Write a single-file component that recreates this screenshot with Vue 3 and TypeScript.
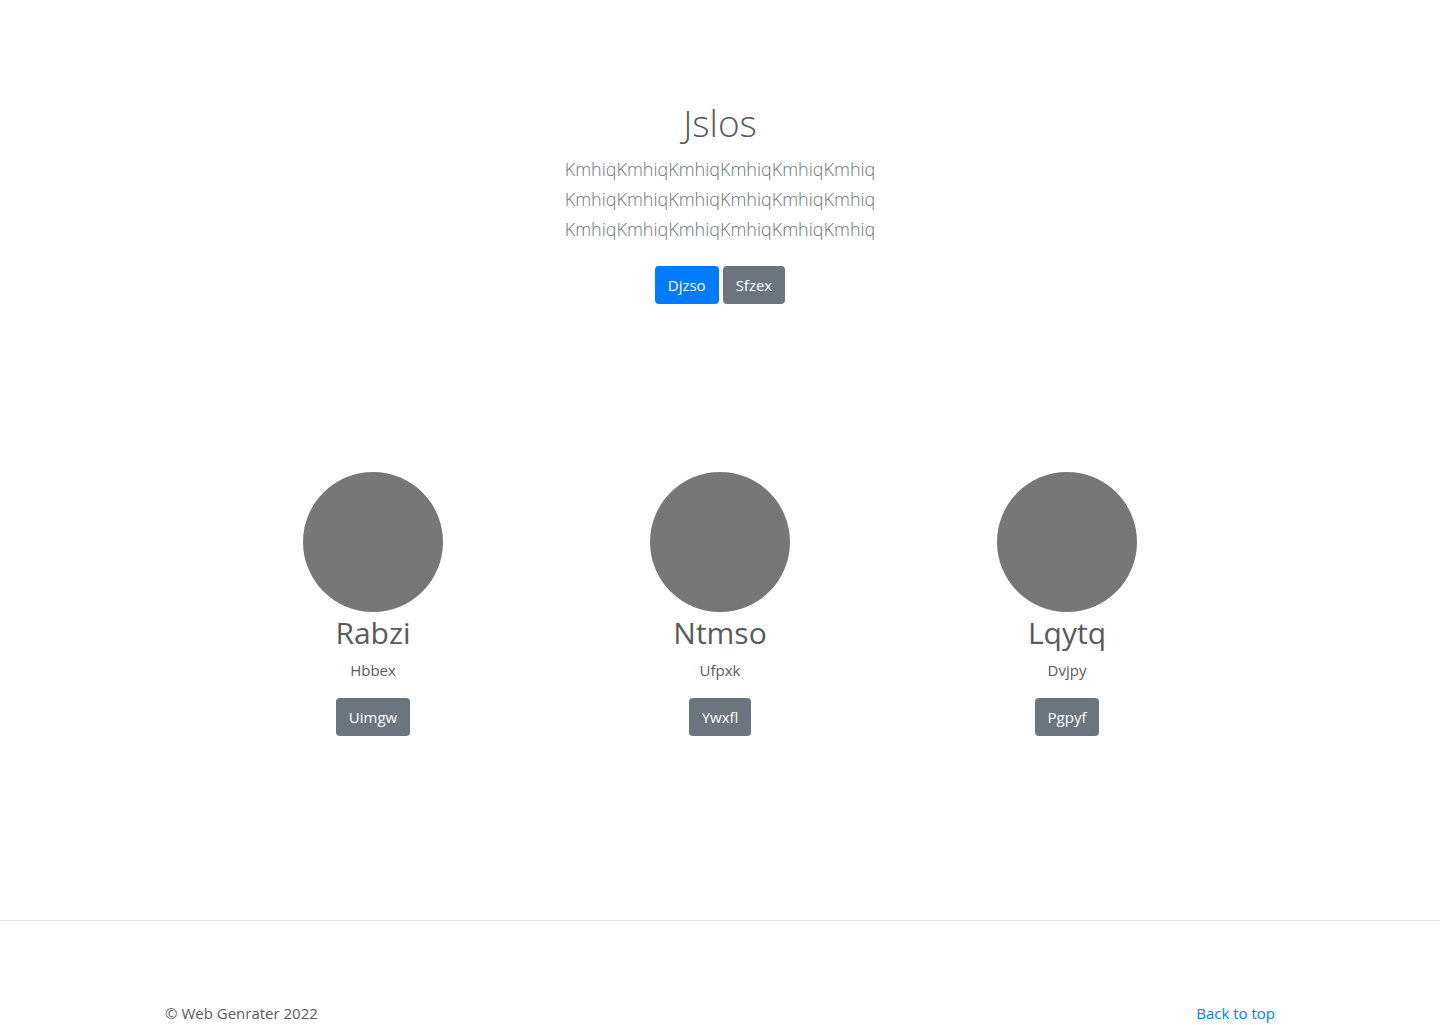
<script setup lang="ts">
interface Feature {
  title: string
  text: string
  action: string
}

const lead: string[] = Array(3).fill('Kmhiq'.repeat(6))

const features: Feature[] = [
  { title: 'Rabzi', text: 'Hbbex', action: 'Uimgw' },
  { title: 'Ntmso', text: 'Ufpxk', action: 'Ywxfl' },
  { title: 'Lqytq', text: 'Dvjpy', action: 'Pgpyf' },
]
</script>

<template>
  <main>
    <section class="hero">
      <h1>Jslos</h1>
      <p class="lead">
        <span v-for="(line, i) in lead" :key="i">{{ line }}</span>
      </p>
      <div class="actions">
        <button type="button" class="btn primary">Djzso</button>
        <button type="button" class="btn">Sfzex</button>
      </div>
    </section>

    <section class="features">
      <article v-for="f in features" :key="f.title" class="feature">
        <svg class="avatar" viewBox="0 0 140 140" aria-hidden="true">
          <circle cx="70" cy="70" r="70" fill="#777" />
        </svg>
        <h2>{{ f.title }}</h2>
        <p>{{ f.text }}</p>
        <button type="button" class="btn">{{ f.action }}</button>
      </article>
    </section>
  </main>

  <footer>
    <div class="footer-row">
      <span>© Web Genrater 2022</span>
      <a href="#">Back to top</a>
    </div>
  </footer>
</template>

<style>
body {
  margin: 0;
  background: #fff;
  color: #5a5a5a;
  font-family: "Segoe UI", "Open Sans", "Noto Sans", sans-serif;
  font-size: 15px;
  line-height: 24px;
}
</style>

<style scoped>
h1,
h2,
p {
  margin: 0;
}

.hero {
  padding: 99px 16px 96px;
  text-align: center;
}

h1 {
  margin-bottom: 7px;
  font-size: 37px;
  font-weight: 300;
  line-height: 48px;
}

.lead {
  margin-bottom: 22px;
  color: #6c757d;
  font-size: 18px;
  font-weight: 300;
  line-height: 30px;
}

.lead span {
  display: block;
}

.actions {
  display: flex;
  justify-content: center;
  gap: 4px;
}

.btn {
  height: 38px;
  padding: 0 13px;
  border: 0;
  border-radius: 4px;
  background: #6c757d;
  color: #fff;
  font: inherit;
  cursor: pointer;
}

.btn.primary {
  background: #007bff;
}

.features {
  display: grid;
  grid-template-columns: repeat(3, 1fr);
  max-width: 1041px;
  margin: 0 auto;
  padding: 72px 0 184px;
}

.feature {
  display: flex;
  flex-direction: column;
  align-items: center;
}

.avatar {
  width: 140px;
  height: 140px;
}

h2 {
  margin-bottom: 4px;
  font-size: 30px;
  font-weight: 400;
  line-height: 42px;
}

.feature p {
  margin-bottom: 16px;
}

footer {
  padding-top: 80px;
  border-top: 1px solid #e5e5e5;
}

.footer-row {
  display: flex;
  justify-content: space-between;
  max-width: 1110px;
  margin: 0 auto;
}

a {
  color: #007bff;
  text-decoration: none;
}
</style>
